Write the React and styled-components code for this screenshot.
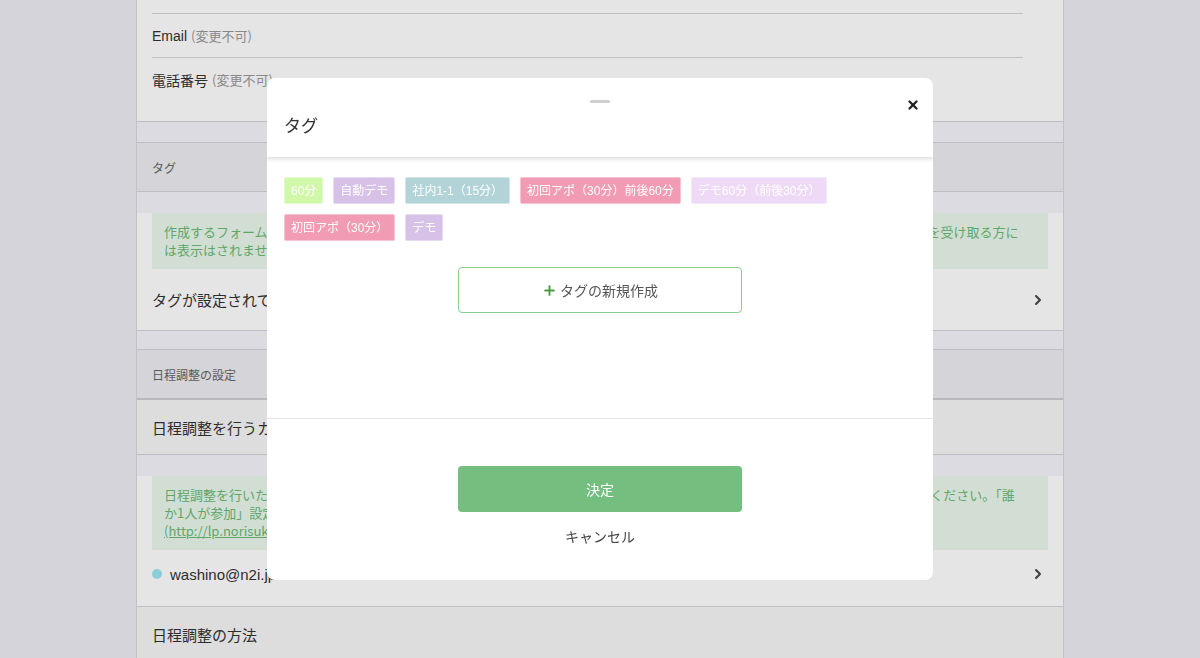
import React from 'react';
import styled, {createGlobalStyle} from 'styled-components';
import {X, Plus, ChevronRight} from 'lucide-react';

//===
// Global
//===

const GlobalStyle = createGlobalStyle`
    html, body {
        margin: 0;
        padding: 0;
        background-color: #eeedf3;
        font-family: "Liberation Sans", "Noto Sans CJK JP", sans-serif;
        color: #333;
        overflow: hidden;
    }
`

//===
// Background page
//===

const Page = styled.div`
    width: 926px;
    margin: 0 auto;
    min-height: 658px;
    background-color: #f5f4fb;
    border-left: 1px solid #d9d9de;
    border-right: 1px solid #d9d9de;
`

const Panel = styled.div`
    background-color: #ffffff;
    padding: 0 15px ${props => props.bottom || 0}px;
    border-bottom: 1px solid #d4d4d8;
`

const Spacer = styled.div`
    height: ${props => props.h || 20}px;
`

const SectionHeader = styled.div`
    height: 48px;
    display: flex;
    align-items: center;
    padding: 0 15px;
    background-color: #edecf2;
    border-top: 1px solid #d4d4d8;
    border-bottom: ${props => props.thick ? '2px solid #cfcfd3' : '1px solid #d4d4d8'};
    font-size: 12px;
    color: #666;
    font-family: "Noto Sans CJK JP", sans-serif;
`

const FieldRow = styled.div`
    height: 43px;
    margin-right: 25px;
    display: flex;
    align-items: center;
    font-size: 14px;
    border-top: 1px solid #d6d6d6;
    .note {
        color: #999;
        font-size: 13px;
        margin-left: 4px;
        font-family: "Noto Sans CJK JP", sans-serif;
    }
`

const TopCut = styled.div`
    height: 13px;
`

const InfoBox = styled.div`
    margin-top: 21px;
    background-color: #eaf8ed;
    color: #6aba74;
    font-size: 13px;
    line-height: 18px;
    padding: 10px 12px;
    white-space: nowrap;
    overflow: hidden;
    font-family: "Noto Sans CJK JP", sans-serif;
    a {
        color: #6aba74;
    }
`

const LinkRow = styled.div`
    height: ${props => props.h || 61}px;
    display: flex;
    align-items: center;
    justify-content: space-between;
    padding-right: 2px;
    font-size: 15px;
    color: #333;
    font-family: "Liberation Sans", "Noto Sans CJK JP", sans-serif;
    .who {
        display: flex;
        align-items: center;
        gap: 8px;
    }
`

const Dot = styled.span`
    width: 10px;
    height: 10px;
    border-radius: 50%;
    background-color: #9ce6f0;
`

const PlainRow = styled.div`
    height: 54px;
    display: flex;
    align-items: center;
    padding: 0 15px;
    background-color: #f7f7f7;
    border-bottom: 1px solid #d4d4d8;
    font-size: 15px;
    font-family: "Noto Sans CJK JP", sans-serif;
`

//===
// Modal
//===

const Overlay = styled.div`
    position: fixed;
    inset: 0;
    background-color: rgba(0, 0, 0, 0.1);
    display: flex;
    align-items: center;
    justify-content: center;
`

const Modal = styled.div`
    width: 666px;
    height: 502px;
    background-color: #fff;
    border-radius: 8px;
    overflow: hidden;
    display: flex;
    flex-direction: column;
    font-family: "Noto Sans CJK JP", sans-serif;
`

const ModalHead = styled.div`
    position: relative;
    height: 79px;
    padding: 0 17px;
    display: flex;
    flex-direction: column;
    box-shadow: 0 2px 4px rgba(0, 0, 0, 0.14);
    z-index: 1;
    .handle {
        align-self: center;
        margin-top: 22px;
        width: 20px;
        height: 3px;
        border-radius: 2px;
        background-color: #cfcfcf;
    }
    h3 {
        margin: 9px 0 0;
        font-size: 17px;
        font-weight: normal;
        color: #333;
    }
`

const CloseButton = styled.div`
    position: absolute;
    top: 20px;
    right: 13px;
    color: #222;
    display: flex;
`

const ModalBody = styled.div`
    height: 262px;
    padding: 20px 17px 0;
    box-sizing: border-box;
    border-bottom: 1px solid #e6e6e6;
    display: flex;
    flex-direction: column;
`

const TagList = styled.div`
    display: flex;
    flex-wrap: wrap;
    gap: 10px 10px;
`

const Tag = styled.span`
    height: 27px;
    padding: 0 6px;
    box-sizing: border-box;
    display: inline-flex;
    align-items: center;
    font-size: 12px;
    line-height: 14px;
    color: #fff;
    border-radius: 2px;
    background-color: ${props => props.color};
    border: 1px solid rgba(255, 255, 255, 0.4);
    font-family: "Liberation Sans", "Noto Sans CJK JP", sans-serif;
`

const OutlineButton = styled.div`
    align-self: center;
    margin-top: 26px;
    width: 284px;
    height: 46px;
    box-sizing: border-box;
    border: 1px solid #8dcd8f;
    border-radius: 4px;
    display: flex;
    align-items: center;
    justify-content: center;
    gap: 3px;
    font-size: 14px;
    color: #555;
    svg {
        color: #4c9a3f;
    }
`

const ModalFoot = styled.div`
    display: flex;
    flex-direction: column;
    align-items: center;
    padding-top: 47px;
`

const SolidButton = styled.div`
    width: 284px;
    height: 46px;
    border-radius: 4px;
    background-color: #74bf80;
    color: #fff;
    font-size: 14px;
    line-height: 20px;
    display: flex;
    align-items: center;
    justify-content: center;
`

const Cancel = styled.div`
    margin-top: 14px;
    font-size: 14px;
    line-height: 20px;
    color: #444;
`

const tags = [
    {label: '60分', color: '#d1f8a9'},
    {label: '自動デモ', color: '#d8c1e6'},
    {label: '社内1-1（15分）', color: '#b2d4d8'},
    {label: '初回アポ（30分）前後60分', color: '#f19cb4'},
    {label: 'デモ60分（前後30分）', color: '#eedaf6'},
    {label: '初回アポ（30分）', color: '#f19cb4'},
    {label: 'デモ', color: '#d8c1e6'},
];

//===
// Component
//===

const App = () => {
    return(
        <>
        <GlobalStyle />
        <Page>
            <Panel bottom={20}>
                <TopCut />
                <FieldRow>Email<span className="note">(変更不可)</span></FieldRow>
                <FieldRow>電話番号<span className="note">(変更不可)</span></FieldRow>
            </Panel>
            <Spacer />
            <SectionHeader>タグ</SectionHeader>
            <Panel>
                <InfoBox>
                    作成するフォームにタグを設定できます。タグは予約の管理や絞り込みに利用することができます。なお、設定したタグはフォームを受け取る方に<br/>
                    は表示はされません。
                </InfoBox>
                <LinkRow>
                    <span>タグが設定されていません</span>
                    <ChevronRight size={16} strokeWidth={3} color="#444" />
                </LinkRow>
            </Panel>
            <Spacer h={18} />
            <SectionHeader thick>日程調整の設定</SectionHeader>
            <PlainRow>日程調整を行うカレンダー</PlainRow>
            <Panel bottom={8}>
                <InfoBox>
                    日程調整を行いたいカレンダーを選択してください。複数のカレンダーを選択した場合は、それぞれの参加者の参加の設定をご選択ください。「誰<br/>
                    か1人が参加」設定の場合は、空いている参加者のいずれかに予定が登録されます。詳しくはヘルプをご覧ください。<br/>
                    <a href="#">(http://lp.norisuke.jp/help/calendar)</a>
                </InfoBox>
                <LinkRow h={48}>
                    <span className="who"><Dot />washino@n2i.jp</span>
                    <ChevronRight size={16} strokeWidth={3} color="#444" />
                </LinkRow>
            </Panel>
            <PlainRow>日程調整の方法</PlainRow>
        </Page>

        <Overlay>
            <Modal>
                <ModalHead>
                    <div className="handle" />
                    <h3>タグ</h3>
                    <CloseButton><X size={14} strokeWidth={4} /></CloseButton>
                </ModalHead>
                <ModalBody>
                    <TagList>
                        {tags.map((t, i) => <Tag key={i} color={t.color}>{t.label}</Tag>)}
                    </TagList>
                    <OutlineButton><Plus size={15} strokeWidth={3} />タグの新規作成</OutlineButton>
                </ModalBody>
                <ModalFoot>
                    <SolidButton>決定</SolidButton>
                    <Cancel>キャンセル</Cancel>
                </ModalFoot>
            </Modal>
        </Overlay>
        </>)
};

export default App;
